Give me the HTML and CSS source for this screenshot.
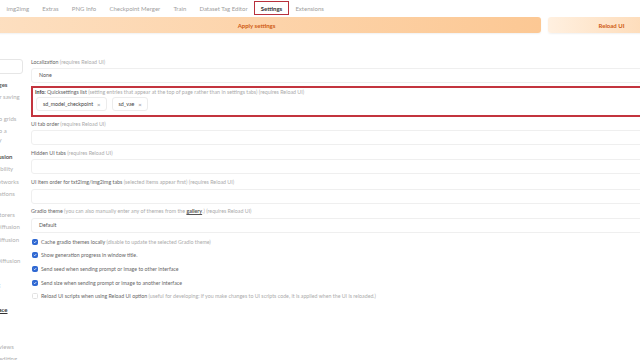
FILE: index.html
```html
<!DOCTYPE html>
<html>
<head>
    <title>Settings</title>
    <link rel="stylesheet" href="styles.css">
</head>
<body>
    <div class="tabs">
        <button class="tab">img2img</button>
        <button class="tab">Extras</button>
        <button class="tab">PNG Info</button>
        <button class="tab">Checkpoint Merger</button>
        <button class="tab">Train</button>
        <button class="tab">Dataset Tag Editor</button>
        <button class="tab active">Settings</button>
        <button class="tab">Extensions</button>
    </div>

    <div class="actions">
        <button class="btn btn-apply">Apply settings</button>
        <button class="btn btn-reload">Reload UI</button>
    </div>

    <div class="settings">
        <div class="sidebar">
            <div class="search"></div>
            <ul class="side-list">
                <li class="side-item side-head">Saving images</li>
                <li class="side-item gap">Paths for saving</li>
                <li class="side-item">Saving to grids</li>
                <li class="side-item">Saving to a<br>directory</li>
                <li class="side-item side-head spaced">Stable Diffusion</li>
                <li class="side-item">Compatibility</li>
                <li class="side-item">Extra Networks</li>
                <li class="side-item gap">Optimizations</li>
                <li class="side-item">Face restorers</li>
                <li class="side-item">Stable Diffusion</li>
                <li class="side-item gap">Video Diffusion</li>
                <li class="side-item">Latent Diffusion</li>
                <li class="side-item">VAE</li>
                <li class="side-item">img2img</li>
                <li class="side-item">Sampler</li>
                <li class="side-item side-head selected">User interface</li>
                <li class="side-item">Infotext</li>
                <li class="side-item">Hotkeys</li>
                <li class="side-item">Live previews</li>
                <li class="side-item">Prompt editing</li>
            </ul>
        </div>

        <div class="main">
            <div class="field">
                <label class="field-label">Localization <span class="hint">(requires Reload UI)</span></label>
                <div class="input">None</div>
            </div>

            <div class="field highlight">
                <label class="field-label"><span class="info">Info:</span> Quicksettings list <span class="hint">(setting entries that appear at the top of page rather than in settings tabs) (requires Reload UI)</span></label>
                <div class="chips">
                    <span class="chip">sd_model_checkpoint <span class="chip-x">&times;</span></span>
                    <span class="chip">sd_vae <span class="chip-x">&times;</span></span>
                </div>
            </div>

            <div class="field">
                <label class="field-label">UI tab order <span class="hint">(requires Reload UI)</span></label>
                <div class="input"></div>
            </div>

            <div class="field">
                <label class="field-label">Hidden UI tabs <span class="hint">(requires Reload UI)</span></label>
                <div class="input"></div>
            </div>

            <div class="field">
                <label class="field-label">UI item order for txt2img/img2img tabs <span class="hint">(selected items appear first) (requires Reload UI)</span></label>
                <div class="input"></div>
            </div>

            <div class="field">
                <label class="field-label">Gradio theme <span class="hint">(you can also manually enter any of themes from the <a class="link">gallery</a>.) (requires Reload UI)</span></label>
                <div class="input">Default</div>
            </div>

            <div class="checks">
                <label class="check-row"><span class="box checked"><svg viewBox="0 0 10 10"><polyline points="2.5,5.2 4.3,7 7.6,3.2"></polyline></svg></span>Cache gradio themes locally <span class="hint">(disable to update the selected Gradio theme)</span></label>
                <label class="check-row"><span class="box checked"><svg viewBox="0 0 10 10"><polyline points="2.5,5.2 4.3,7 7.6,3.2"></polyline></svg></span>Show generation progress in window title.</label>
                <label class="check-row"><span class="box checked"><svg viewBox="0 0 10 10"><polyline points="2.5,5.2 4.3,7 7.6,3.2"></polyline></svg></span>Send seed when sending prompt or image to other interface</label>
                <label class="check-row"><span class="box checked"><svg viewBox="0 0 10 10"><polyline points="2.5,5.2 4.3,7 7.6,3.2"></polyline></svg></span>Send size when sending prompt or image to another interface</label>
                <label class="check-row"><span class="box"></span>Reload UI scripts when using Reload UI option <span class="hint">(useful for developing: if you make changes to UI scripts code, it is applied when the UI is reloaded.)</span></label>
            </div>
        </div>
    </div>
</body>
</html>
```

FILE: styles.css
```css
body {
    margin: 0;
    width: 640px;
    height: 360px;
    overflow: hidden;
    font-family: Lato, "Open Sans", sans-serif;
    background-color: #fff;
    color: #555;
}

.tabs {
    display: flex;
    height: 15px;
    padding-top: 1px;
    box-sizing: border-box;
}

.tab {
    height: 14px;
    padding: 0 5.6px;
    background: none;
    border: 1.5px solid transparent;
    font-family: inherit;
    font-size: 6px;
    color: #a0a0a0;
}

.tab.active {
    border-color: #b8303c;
    color: #333;
    font-weight: 700;
}

.actions {
    display: flex;
    gap: 7px;
    height: 16px;
    margin: 2px -35px 0 -28px;
}

.btn {
    border: none;
    border-radius: 3px;
    font-family: inherit;
    font-size: 6px;
    font-weight: 700;
    color: #cf5a12;
    box-shadow: 0 1px 2px rgba(0, 0, 0, 0.06);
}

.btn-apply {
    flex: 1;
    background: linear-gradient(to right, #fde0c2, #fcc894);
}

.btn-reload {
    width: 127px;
    background: linear-gradient(to right, #fff0e0, #fdd6ae);
}

.settings {
    display: flex;
    margin-top: 3px;
}

.sidebar {
    flex: none;
    width: 46px;
    margin-left: -22px;
    margin-right: 7px;
    padding-top: 23px;
}

.search {
    height: 15px;
    margin-right: 1px;
    border: 1px solid #e6e6e6;
    border-radius: 3px;
    box-sizing: border-box;
}

.side-list {
    list-style-type: none;
    margin: 4.5px 0 0;
    padding: 0;
}

.side-item {
    padding: 1.65px 0;
    font-size: 6px;
    line-height: 9px;
    color: #b0b0b0;
    white-space: nowrap;
}

.side-item.gap {
    margin-bottom: 9px;
}

.side-head {
    margin-left: -8px;
    font-weight: 700;
    color: #555;
}

.side-head.spaced {
    margin-top: 4.7px;
}

.side-item.selected {
    color: #333;
    text-decoration: underline;
}

.main {
    flex: 1;
    min-width: 0;
    margin-right: -20px;
    padding-top: 22.5px;
}

.field {
    margin-bottom: 4.8px;
}

.field-label {
    display: block;
    margin-bottom: 2.5px;
    font-size: 5.3px;
    line-height: 7px;
    color: #666;
    white-space: nowrap;
}

.hint {
    color: #ababab;
}

.link {
    color: #555;
    font-weight: 700;
    text-decoration: underline;
}

.input {
    height: 15px;
    padding-left: 7px;
    border: 1px solid #efefef;
    border-radius: 3px;
    box-sizing: border-box;
    font-size: 5.3px;
    line-height: 13px;
    color: #555;
}

.highlight {
    margin-top: -1.8px;
    margin-bottom: 4px;
    padding: 0.5px 2px 3.5px;
    border: 2px solid #c3343e;
}

.highlight .field-label {
    margin-bottom: 1.5px;
}

.info {
    font-weight: 700;
    color: #444;
}

.chips {
    display: flex;
    gap: 5px;
    height: 14px;
    margin-left: 1px;
}

.chip {
    display: flex;
    align-items: center;
    gap: 4px;
    padding: 0 5px 0 6px;
    border: 1px solid #ececec;
    border-radius: 3px;
    font-size: 5.3px;
    color: #444;
}

.chip-x {
    font-size: 6px;
    color: #888;
}

.checks {
    margin-top: -3px;
}

.check-row {
    display: flex;
    align-items: center;
    height: 13.7px;
    font-size: 5.25px;
    color: #666;
    white-space: pre;
}

.box {
    flex: none;
    width: 6px;
    height: 6px;
    margin: 0 3px 0 1px;
    border: 1px solid #e2e2e2;
    border-radius: 1.5px;
    box-sizing: border-box;
    background-color: #fff;
}

.box.checked {
    border-color: #2f68d2;
    background-color: #2f68d2;
}

.box svg {
    display: block;
    width: 100%;
    height: 100%;
    fill: none;
    stroke: #fff;
    stroke-width: 1.8;
    stroke-linecap: round;
    stroke-linejoin: round;
}
```
